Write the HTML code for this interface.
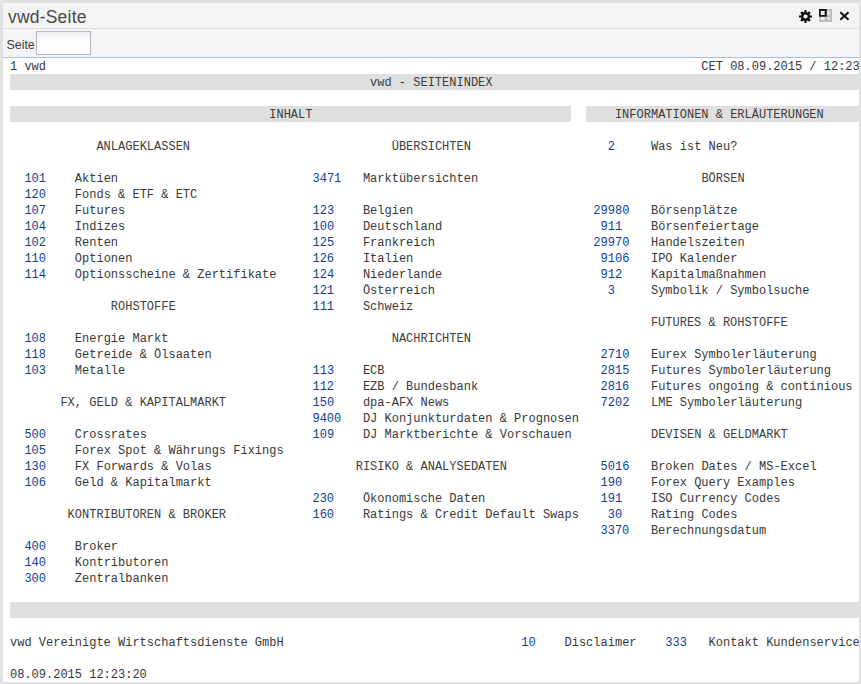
<!DOCTYPE html>
<html><head><meta charset="utf-8">
<style>
html,body{margin:0;padding:0;}
body{width:861px;height:684px;background:#e1e1e1;position:relative;overflow:hidden;}
#win{position:absolute;left:3px;top:3px;width:856px;height:679px;background:#fff;overflow:hidden;}
#title{position:absolute;left:0;top:0;width:856px;height:25px;background:#f4f4f4;border-bottom:1px solid #e0e0e0;}
#title .tx{position:absolute;left:5px;top:3px;font-family:"Liberation Sans",sans-serif;font-size:17.5px;letter-spacing:0.2px;color:#4a4a4a;line-height:22px;}
#tb{position:absolute;left:0;top:26px;width:856px;height:28px;background:#f4f4f4;border-bottom:1px solid #a9c1da;}
#tb .lb{position:absolute;left:3.5px;top:9px;font-family:"Liberation Sans",sans-serif;font-size:12.4px;color:#3c3c3c;line-height:14px;}
#tb .in{position:absolute;left:33px;top:2px;width:53px;height:22px;border:1px solid #b6b6c8;background:linear-gradient(#eceeef,#fff 45%);}
#content{position:absolute;left:7px;top:55px;width:849px;height:624px;overflow:hidden;}
.r{position:absolute;left:0;height:16px;line-height:16px;white-space:pre;font-family:"Liberation Mono",monospace;font-size:12px;color:#383838;}
.bar{position:absolute;height:16px;background:#dfdfdf;}
.n{color:#0f4096;}
.h{color:#3d3d3d;}
.ic{position:absolute;}
</style></head><body>
<div id="win">
<div id="title"><span class="tx">vwd-Seite</span>
<svg class="ic" style="left:795px;top:5.9px" width="15" height="15" viewBox="0 0 15 15"><g fill="#111"><circle cx="7.5" cy="7.5" r="4.5"/><rect x="6.45" y="1" width="2.1" height="13"/><rect x="1" y="6.45" width="13" height="2.1"/><rect x="6.2" y="1.3" width="2.6" height="12.4" transform="rotate(45 7.5 7.5)"/><rect x="6.2" y="1.3" width="2.6" height="12.4" transform="rotate(-45 7.5 7.5)"/></g><circle cx="7.5" cy="7.5" r="2.1" fill="#f4f4f4"/></svg>
<svg class="ic" style="left:816px;top:6px" width="13" height="13" viewBox="0 0 13 13"><rect x="0" y="0" width="13" height="13" fill="#bdbdbd"/><rect x="8.4" y="2.2" width="2.3" height="3.6" fill="#f4f4f4"/><rect x="1.7" y="8.4" width="4" height="2.3" fill="#f4f4f4"/><rect x="8.4" y="8.4" width="2.3" height="2.3" fill="#f4f4f4"/><rect x="0" y="0" width="7.7" height="7.7" fill="#111"/><rect x="1.7" y="1.9" width="4" height="4.1" fill="#f4f4f4"/></svg>
<svg class="ic" style="left:836px;top:8.3px" width="11" height="10" viewBox="0 0 11 10"><path d="M1.3 1.2L9.5 8.8M9.5 1.2L1.3 8.8" stroke="#111" stroke-width="2"/></svg>
</div>
<div id="tb"><span class="lb">Seite</span><div class="in"></div></div>
<div id="content">
<div class="bar" style="top:16px;left:0.0px;right:-20px"></div>
<div class="bar" style="top:48px;left:0.0px;width:561.0px"></div>
<div class="bar" style="top:48px;left:576.0px;right:-20px"></div>
<div class="bar" style="top:544px;left:0.0px;right:-20px"></div>

<div class="r" style="top:1px"><span class="t">1 vwd</span>                                                                                           <span class="t">CET 08.09.2015 / 12:23</span></div>
<div class="r" style="top:17px">                                                  <span class="h">vwd - SEITENINDEX</span></div>
<div class="r" style="top:49px">                                    <span class="h">INHALT</span>                                          <span class="h">INFORMATIONEN &amp; ERLÄUTERUNGEN</span></div>
<div class="r" style="top:81px">            <span class="h">ANLAGEKLASSEN</span>                            <span class="h">ÜBERSICHTEN</span>                   <span class="n">2</span>     <span class="t">Was ist Neu?</span></div>
<div class="r" style="top:113px">  <span class="n">101</span>    <span class="t">Aktien</span>                           <span class="n">3471</span>   <span class="t">Marktübersichten</span>                               <span class="h">BÖRSEN</span></div>
<div class="r" style="top:129px">  <span class="n">120</span>    <span class="t">Fonds &amp; ETF &amp; ETC</span></div>
<div class="r" style="top:145px">  <span class="n">107</span>    <span class="t">Futures</span>                          <span class="n">123</span>    <span class="t">Belgien</span>                         <span class="n">29980</span>   <span class="t">Börsenplätze</span></div>
<div class="r" style="top:161px">  <span class="n">104</span>    <span class="t">Indizes</span>                          <span class="n">100</span>    <span class="t">Deutschland</span>                      <span class="n">911</span>    <span class="t">Börsenfeiertage</span></div>
<div class="r" style="top:177px">  <span class="n">102</span>    <span class="t">Renten</span>                           <span class="n">125</span>    <span class="t">Frankreich</span>                      <span class="n">29970</span>   <span class="t">Handelszeiten</span></div>
<div class="r" style="top:193px">  <span class="n">110</span>    <span class="t">Optionen</span>                         <span class="n">126</span>    <span class="t">Italien</span>                          <span class="n">9106</span>   <span class="t">IPO Kalender</span></div>
<div class="r" style="top:209px">  <span class="n">114</span>    <span class="t">Optionsscheine &amp; Zertifikate</span>     <span class="n">124</span>    <span class="t">Niederlande</span>                      <span class="n">912</span>    <span class="t">Kapitalmaßnahmen</span></div>
<div class="r" style="top:225px">                                          <span class="n">121</span>    <span class="t">Österreich</span>                        <span class="n">3</span>     <span class="t">Symbolik / Symbolsuche</span></div>
<div class="r" style="top:241px">              <span class="h">ROHSTOFFE</span>                   <span class="n">111</span>    <span class="t">Schweiz</span></div>
<div class="r" style="top:257px">                                                                                         <span class="h">FUTURES &amp; ROHSTOFFE</span></div>
<div class="r" style="top:273px">  <span class="n">108</span>    <span class="t">Energie Markt</span>                               <span class="h">NACHRICHTEN</span></div>
<div class="r" style="top:289px">  <span class="n">118</span>    <span class="t">Getreide &amp; Ölsaaten</span>                                                      <span class="n">2710</span>   <span class="t">Eurex Symbolerläuterung</span></div>
<div class="r" style="top:305px">  <span class="n">103</span>    <span class="t">Metalle</span>                          <span class="n">113</span>    <span class="t">ECB</span>                              <span class="n">2815</span>   <span class="t">Futures Symbolerläuterung</span></div>
<div class="r" style="top:321px">                                          <span class="n">112</span>    <span class="t">EZB / Bundesbank</span>                 <span class="n">2816</span>   <span class="t">Futures ongoing &amp; continious</span></div>
<div class="r" style="top:337px">       <span class="h">FX, GELD &amp; KAPITALMARKT</span>            <span class="n">150</span>    <span class="t">dpa-AFX News</span>                     <span class="n">7202</span>   <span class="t">LME Symbolerläuterung</span></div>
<div class="r" style="top:353px">                                          <span class="n">9400</span>   <span class="t">DJ Konjunkturdaten &amp; Prognosen</span></div>
<div class="r" style="top:369px">  <span class="n">500</span>    <span class="t">Crossrates</span>                       <span class="n">109</span>    <span class="t">DJ Marktberichte &amp; Vorschauen</span>           <span class="h">DEVISEN &amp; GELDMARKT</span></div>
<div class="r" style="top:385px">  <span class="n">105</span>    <span class="t">Forex Spot &amp; Währungs Fixings</span></div>
<div class="r" style="top:401px">  <span class="n">130</span>    <span class="t">FX Forwards &amp; Volas</span>                    <span class="h">RISIKO &amp; ANALYSEDATEN</span>             <span class="n">5016</span>   <span class="t">Broken Dates / MS-Excel</span></div>
<div class="r" style="top:417px">  <span class="n">106</span>    <span class="t">Geld &amp; Kapitalmarkt</span>                                                      <span class="n">190</span>    <span class="t">Forex Query Examples</span></div>
<div class="r" style="top:433px">                                          <span class="n">230</span>    <span class="t">Ökonomische Daten</span>                <span class="n">191</span>    <span class="t">ISO Currency Codes</span></div>
<div class="r" style="top:449px">        <span class="h">KONTRIBUTOREN &amp; BROKER</span>            <span class="n">160</span>    <span class="t">Ratings &amp; Credit Default Swaps</span>    <span class="n">30</span>    <span class="t">Rating Codes</span></div>
<div class="r" style="top:465px">                                                                                  <span class="n">3370</span>   <span class="t">Berechnungsdatum</span></div>
<div class="r" style="top:481px">  <span class="n">400</span>    <span class="t">Broker</span></div>
<div class="r" style="top:497px">  <span class="n">140</span>    <span class="t">Kontributoren</span></div>
<div class="r" style="top:513px">  <span class="n">300</span>    <span class="t">Zentralbanken</span></div>
<div class="r" style="top:577px"><span class="t">vwd Vereinigte Wirtschaftsdienste GmbH</span>                                 <span class="n">10</span>    <span class="t">Disclaimer</span>    <span class="n">333</span>   <span class="t">Kontakt Kundenservice</span></div>
<div class="r" style="top:609px"><span class="t">08.09.2015 12:23:20</span></div>
</div>
</div>
</body></html>
